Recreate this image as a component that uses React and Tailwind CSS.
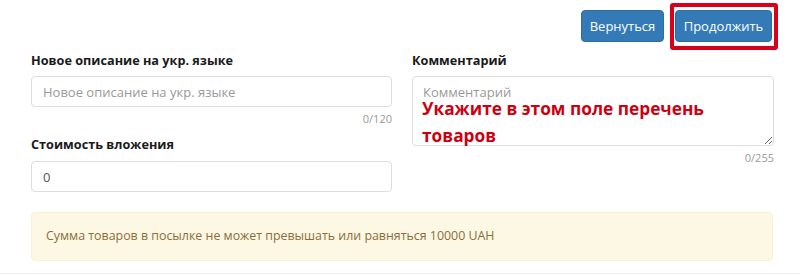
import React from "react";

export default function App() {
  return (
    <div className="w-[800px] h-[275px] bg-white font-['Open_Sans',sans-serif] text-[13px] text-[#333] relative overflow-hidden">
      <div className="flex justify-end gap-[11px] pt-[10px] pr-[28px]">
        <button className="h-[32px] w-[83px] rounded-[4px] bg-[#337ab7] border border-[#2e6da4] text-white text-[13px] leading-none">
          Вернуться
        </button>
        <div className="relative">
          <button className="h-[32px] w-[97px] rounded-[4px] bg-[#337ab7] border border-[#2e6da4] text-white text-[13px] leading-none">
            Продолжить
          </button>
          <span className="pointer-events-none absolute -left-[5px] -right-[6px] -top-[7px] -bottom-[8px] border-[4px] border-[#d9001b] rounded-[3px]" />
        </div>
      </div>

      <div className="grid grid-cols-[361px_362px] gap-x-[20px] pl-[31px] mt-[8px]">
        <div className="flex flex-col">
          <label className="font-bold text-[12.7px] leading-[20px] text-[#1a1a1a]">Новое описание на укр. языке</label>
          <input
            className="mt-[6px] h-[31px] w-full rounded-[4px] border border-[#ddd] px-[11px] text-[13px] text-[#555] placeholder:text-[#999] outline-none"
            placeholder="Новое описание на укр. языке"
          />
          <div className="text-right text-[11px] leading-[17px] text-[#999] mt-[3px]">0/120</div>
          <label className="font-bold text-[12.7px] leading-[20px] text-[#1a1a1a] mt-[7px]">Стоимость вложения</label>
          <input
            className="mt-[7px] h-[31px] w-full rounded-[4px] border border-[#ddd] px-[11px] text-[13px] text-[#555] outline-none"
            defaultValue="0"
          />
        </div>
        <div className="flex flex-col">
          <label className="font-bold text-[12.7px] leading-[20px] text-[#1a1a1a]">Комментарий</label>
          <div className="relative mt-[6px]">
            <textarea
              className="block h-[70px] w-full rounded-[4px] border border-[#ddd] px-[10px] py-[5px] text-[13px] leading-[20px] text-[#555] placeholder:text-[#999] outline-none"
              placeholder="Комментарий"
            />
            <div className="absolute left-[10px] top-[19px] w-[330px] font-bold text-[17.3px] leading-[27px] text-[#cc0010] [text-shadow:0_0_2px_#fff,0_0_2px_#fff,1px_1px_2px_#fff]">
              Укажите в этом поле перечень товаров
            </div>
          </div>
          <div className="text-right text-[11px] leading-[17px] text-[#999] mt-[3px]">0/255</div>
        </div>
      </div>

      <div className="ml-[31px] mr-[27px] mt-[20px] h-[49px] flex items-center rounded-[4px] bg-[#fcf8e3] border border-[#faf2d4] pl-[14px] text-[12.4px] text-[#8a6d3b]">
        Сумма товаров в посылке не может превышать или равняться 10000 UAH
      </div>

      <div className="absolute left-0 right-0 bottom-[1px] h-px bg-[#eee]" />
    </div>
  );
}
